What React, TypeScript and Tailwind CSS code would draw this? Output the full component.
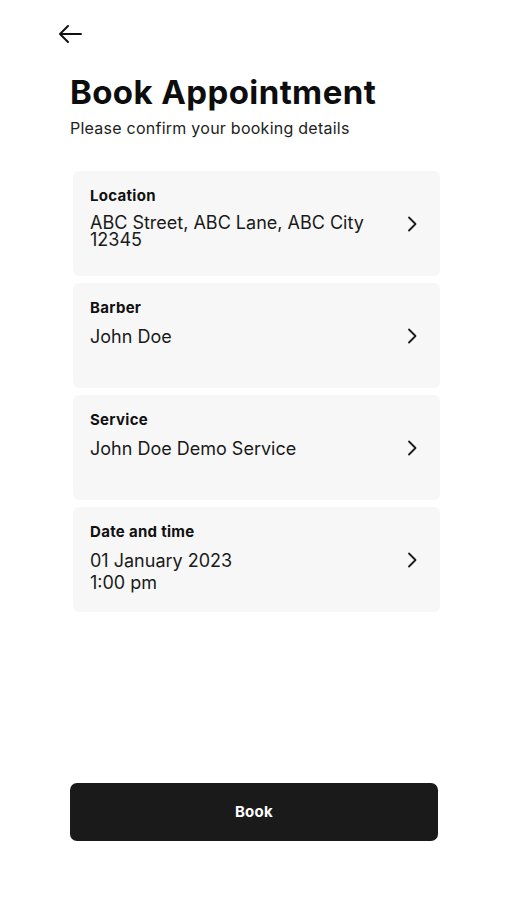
import React from "react";

const Chevron = () => (
  <svg width="14" height="18" viewBox="0 0 14 18" fill="none" className="shrink-0">
    <path d="M4 2.5 L10.5 9 L4 15.5" stroke="#1a1a1a" strokeWidth="1.8" strokeLinecap="round" strokeLinejoin="round" />
  </svg>
);

const Card = ({ label, lines, leading }: { label: string; lines: string[]; leading: string }) => (
  <div className="flex h-[105px] items-center rounded-[6px] bg-[#f7f7f7] pl-[17px] pr-[21px]">
    <div className="flex h-full flex-1 flex-col pt-[15px]">
      <div className="text-[15px] font-bold leading-[20px] tracking-[0.3px] text-[#111]">{label}</div>
      <div className={`mt-[8px] text-[18px] text-[#1a1a1a] ${leading}`}>
        {lines.map((l) => (
          <div key={l}>{l}</div>
        ))}
      </div>
    </div>
    <Chevron />
  </div>
);

export default function App() {
  return (
    <div className="relative h-[900px] w-[507px] bg-white font-['Inter',sans-serif]">
      <div className="pl-[57px] pt-[22px]">
        <svg width="26" height="24" viewBox="0 0 26 24" fill="none">
          <path d="M24 12 H3 M11 4 L3 12 L11 20" stroke="#111" strokeWidth="2" strokeLinecap="round" strokeLinejoin="round" />
        </svg>
      </div>
      <div className="pl-[70px] pt-[26px]">
        <h1 className="text-[33px] font-bold leading-[40px] tracking-[0.4px] text-[#0d0d0d]">Book Appointment</h1>
        <p className="mt-[6px] text-[16px] leading-[20px] tracking-[0.25px] text-[#222]">Please confirm your booking details</p>
      </div>
      <div className="ml-[73px] mt-[33px] flex w-[367px] flex-col gap-[7px]">
        <Card label="Location" lines={["ABC Street, ABC Lane, ABC City", "12345"]} leading="leading-[17px]" />
        <Card label="Barber" lines={["John Doe"]} leading="leading-[22px]" />
        <Card label="Service" lines={["John Doe Demo Service"]} leading="leading-[22px]" />
        <Card label="Date and time" lines={["01 January 2023", "1:00 pm"]} leading="leading-[22px]" />
      </div>
      <div className="ml-[70px] mt-[171px] flex h-[58px] w-[368px] items-center justify-center rounded-[7px] bg-[#1a1a1a]">
        <span className="text-[15px] font-bold tracking-[0.3px] text-white">Book</span>
      </div>
    </div>
  );
}
